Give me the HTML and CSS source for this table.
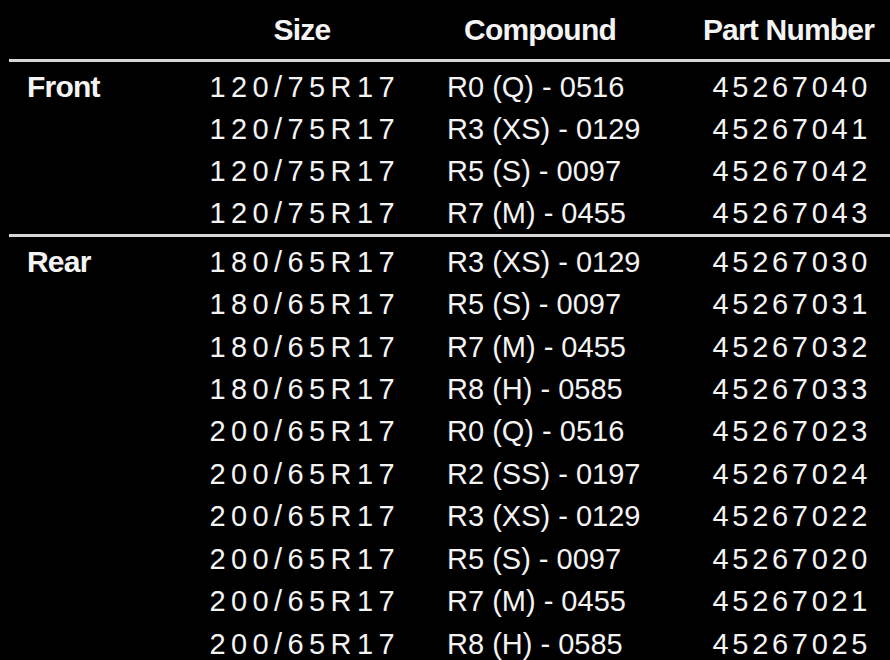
FILE: index.html
```html
<!DOCTYPE html>
<html>
<head>
<meta charset="utf-8">
<link rel="stylesheet" href="styles.css">
</head>
<body>
<div class="tbl">
  <div class="row head">
    <div class="c1"></div>
    <div class="c2">Size</div>
    <div class="c3">Compound</div>
    <div class="c4">Part Number</div>
  </div>
  <div class="group front">
    <div class="row"><div class="c1 lbl">Front</div><div class="c2 sz">120/75R17</div><div class="c3 cp">R0 (Q) - 0516</div><div class="c4 pn">45267040</div></div>
    <div class="row"><div class="c1"></div><div class="c2 sz">120/75R17</div><div class="c3 cp">R3 (XS) - 0129</div><div class="c4 pn">45267041</div></div>
    <div class="row"><div class="c1"></div><div class="c2 sz">120/75R17</div><div class="c3 cp">R5 (S) - 0097</div><div class="c4 pn">45267042</div></div>
    <div class="row"><div class="c1"></div><div class="c2 sz">120/75R17</div><div class="c3 cp">R7 (M) - 0455</div><div class="c4 pn">45267043</div></div>
  </div>
  <div class="group rear">
    <div class="row"><div class="c1 lbl">Rear</div><div class="c2 sz">180/65R17</div><div class="c3 cp">R3 (XS) - 0129</div><div class="c4 pn">45267030</div></div>
    <div class="row"><div class="c1"></div><div class="c2 sz">180/65R17</div><div class="c3 cp">R5 (S) - 0097</div><div class="c4 pn">45267031</div></div>
    <div class="row"><div class="c1"></div><div class="c2 sz">180/65R17</div><div class="c3 cp">R7 (M) - 0455</div><div class="c4 pn">45267032</div></div>
    <div class="row"><div class="c1"></div><div class="c2 sz">180/65R17</div><div class="c3 cp">R8 (H) - 0585</div><div class="c4 pn">45267033</div></div>
    <div class="row"><div class="c1"></div><div class="c2 sz">200/65R17</div><div class="c3 cp">R0 (Q) - 0516</div><div class="c4 pn">45267023</div></div>
    <div class="row"><div class="c1"></div><div class="c2 sz">200/65R17</div><div class="c3 cp">R2 (SS) - 0197</div><div class="c4 pn">45267024</div></div>
    <div class="row"><div class="c1"></div><div class="c2 sz">200/65R17</div><div class="c3 cp">R3 (XS) - 0129</div><div class="c4 pn">45267022</div></div>
    <div class="row"><div class="c1"></div><div class="c2 sz">200/65R17</div><div class="c3 cp">R5 (S) - 0097</div><div class="c4 pn">45267020</div></div>
    <div class="row"><div class="c1"></div><div class="c2 sz">200/65R17</div><div class="c3 cp">R7 (M) - 0455</div><div class="c4 pn">45267021</div></div>
    <div class="row"><div class="c1"></div><div class="c2 sz">200/65R17</div><div class="c3 cp">R8 (H) - 0585</div><div class="c4 pn">45267025</div></div>
  </div>
</div>
</body>
</html>
```

FILE: styles.css
```css
html, body {
  margin: 0;
  padding: 0;
  background: #000;
  height: 100%;
  overflow: hidden;
}
body {
  color: #f4f4f4;
  font-family: "Liberation Sans", Arial, sans-serif;
}
.tbl {
  padding-left: 9px;
}
.row {
  display: grid;
  grid-template-columns: 191px 204px 286px 1fr;
  align-items: center;
  height: 42px;
  white-space: nowrap;
}
.head {
  height: 59px;
  border-bottom: 3px solid #d6d6d6;
  font-weight: bold;
  font-size: 30px;
  letter-spacing: -0.8px;
  line-height: 59px;
}
.head .c2 { text-align: center; }
.head .c3 { text-align: center; padding-right: 14px; }
.head .c4 { text-align: center; padding-right: 3px; }
.group {
  padding-top: 4px;
}
.front {
  border-bottom: 3px solid #d6d6d6;
}
.rear .row {
  height: 42.45px;
}
.lbl {
  padding-left: 18px;
  font-weight: bold;
  font-size: 30px;
  letter-spacing: -0.8px;
}
.sz, .cp, .pn {
  font-size: 29px;
}
.sz {
  text-align: center;
  letter-spacing: 5.4px;
  padding-left: 5.4px;
}
.cp {
  padding-left: 43px;
}
.pn {
  text-align: center;
  letter-spacing: 3.7px;
  padding-left: 3.7px;
}
```
